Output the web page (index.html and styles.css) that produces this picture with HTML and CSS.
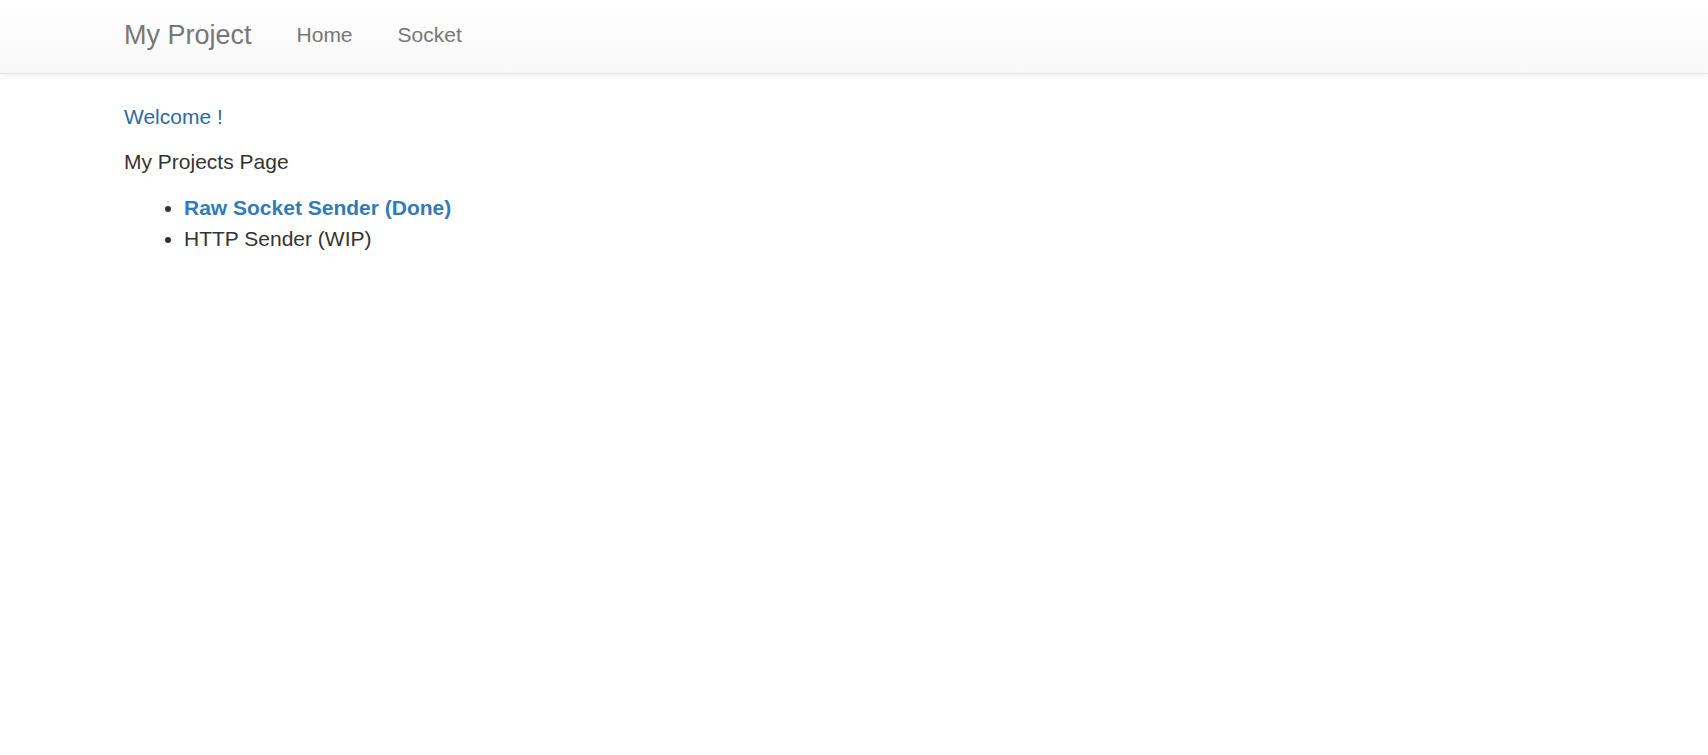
FILE: index.html
```html
<!DOCTYPE html>
<html>
  <head>
    <meta charset="utf-8" />
    <title>My Project</title>
    <meta name="viewport" content="width=device-width, initial-scale=1" />
    <link rel="stylesheet" href="styles.css">
  </head>

  <body>
    <nav class="navbar">
      <div class="container nav-inner">
        <a class="brand" href="#">My Project</a>
        <ul class="nav-links">
          <li><a href="#">Home</a></li>
          <li><a href="#">Socket</a></li>
        </ul>
      </div>
    </nav>

    <div class="container">
      <p class="welcome">Welcome !</p>
      <p>My Projects Page</p>
      <ul class="projects">
        <li><a href="#"><strong>Raw Socket Sender (Done)</strong></a></li>
        <li>HTTP Sender (WIP)</li>
      </ul>
    </div>
  </body>
</html>
```

FILE: styles.css
```css
* {
  margin: 0;
  padding: 0;
  box-sizing: border-box;
}

body {
  font-family: "Liberation Sans", Arial, sans-serif;
  font-size: 21px;
  line-height: 30px;
  color: #333;
  background-color: #fff;
}

a {
  text-decoration: none;
}

.container {
  padding: 0 124px;
}

.navbar {
  height: 74px;
  background-image: linear-gradient(to bottom, #fff 0, #f8f8f8 100%);
  border-bottom: 1px solid #e3e3e3;
  box-shadow: 0 1px 7px rgba(0, 0, 0, 0.075);
  margin-bottom: 28px;
}

.nav-inner {
  display: flex;
  align-items: flex-start;
  padding-top: 20px;
}

.brand {
  font-size: 27px;
  line-height: 30px;
  color: #777;
  margin-right: 45px;
}

.nav-links {
  list-style: none;
  display: flex;
  gap: 45px;
}

.nav-links a {
  color: #777;
  display: block;
  line-height: 30px;
}

p {
  margin-bottom: 15px;
}

.welcome {
  color: #31699f;
}

.projects {
  padding-left: 60px;
  margin-bottom: 15px;
}

.projects li {
  line-height: 31px;
}

.projects a {
  color: #337ab7;
}
```
